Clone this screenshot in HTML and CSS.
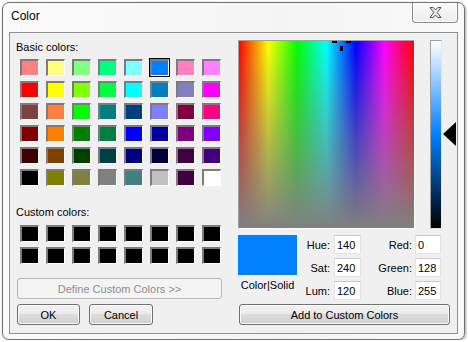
FILE: index.html
```html
<!DOCTYPE html>
<html lang="en">
<head>
    <meta charset="UTF-8">
    <title>Color</title>
    <link rel="stylesheet" href="styles.css">
</head>
<body>
    <div class="window">
        <div class="titlebar">
            <span class="title">Color</span>
            <div class="close">
                <svg width="13" height="11" viewBox="0 0 13 11"><polygon points="1,0.5 4.2,0.5 6.5,3 8.8,0.5 12,0.5 8.2,5.5 12,10.5 8.8,10.5 6.5,8 4.2,10.5 1,10.5 4.8,5.5" fill="#e9e9ec" stroke="#4f5361" stroke-width="1" stroke-linejoin="round"/></svg>
            </div>
        </div>
        <div class="client">
            <div class="left">
                <div class="label">Basic colors:</div>
                <div class="swatches">
                    <div class="swatch" style="background:#ff8080"></div>
                    <div class="swatch" style="background:#ffff80"></div>
                    <div class="swatch" style="background:#80ff80"></div>
                    <div class="swatch" style="background:#00ff80"></div>
                    <div class="swatch" style="background:#80ffff"></div>
                    <div class="swatch selected" style="background:#0080ff"></div>
                    <div class="swatch" style="background:#ff80c0"></div>
                    <div class="swatch" style="background:#ff80ff"></div>

                    <div class="swatch" style="background:#ff0000"></div>
                    <div class="swatch" style="background:#ffff00"></div>
                    <div class="swatch" style="background:#80ff00"></div>
                    <div class="swatch" style="background:#00ff40"></div>
                    <div class="swatch" style="background:#00ffff"></div>
                    <div class="swatch" style="background:#0080c0"></div>
                    <div class="swatch" style="background:#8080c0"></div>
                    <div class="swatch" style="background:#ff00ff"></div>

                    <div class="swatch" style="background:#804040"></div>
                    <div class="swatch" style="background:#ff8040"></div>
                    <div class="swatch" style="background:#00ff00"></div>
                    <div class="swatch" style="background:#008080"></div>
                    <div class="swatch" style="background:#004080"></div>
                    <div class="swatch" style="background:#8080ff"></div>
                    <div class="swatch" style="background:#800040"></div>
                    <div class="swatch" style="background:#ff0080"></div>

                    <div class="swatch" style="background:#800000"></div>
                    <div class="swatch" style="background:#ff8000"></div>
                    <div class="swatch" style="background:#008000"></div>
                    <div class="swatch" style="background:#008040"></div>
                    <div class="swatch" style="background:#0000ff"></div>
                    <div class="swatch" style="background:#0000a0"></div>
                    <div class="swatch" style="background:#800080"></div>
                    <div class="swatch" style="background:#8000ff"></div>

                    <div class="swatch" style="background:#400000"></div>
                    <div class="swatch" style="background:#804000"></div>
                    <div class="swatch" style="background:#004000"></div>
                    <div class="swatch" style="background:#004040"></div>
                    <div class="swatch" style="background:#000080"></div>
                    <div class="swatch" style="background:#000040"></div>
                    <div class="swatch" style="background:#400040"></div>
                    <div class="swatch" style="background:#400080"></div>

                    <div class="swatch" style="background:#000000"></div>
                    <div class="swatch" style="background:#808000"></div>
                    <div class="swatch" style="background:#808040"></div>
                    <div class="swatch" style="background:#808080"></div>
                    <div class="swatch" style="background:#408080"></div>
                    <div class="swatch" style="background:#c0c0c0"></div>
                    <div class="swatch" style="background:#400040"></div>
                    <div class="swatch" style="background:#ffffff"></div>
                </div>

                <div class="label custom-label">Custom colors:</div>
                <div class="swatches custom">
                    <div class="swatch"></div><div class="swatch"></div><div class="swatch"></div><div class="swatch"></div>
                    <div class="swatch"></div><div class="swatch"></div><div class="swatch"></div><div class="swatch"></div>
                    <div class="swatch"></div><div class="swatch"></div><div class="swatch"></div><div class="swatch"></div>
                    <div class="swatch"></div><div class="swatch"></div><div class="swatch"></div><div class="swatch"></div>
                </div>

                <button class="btn define" disabled>Define Custom Colors &gt;&gt;</button>
                <div class="btn-row">
                    <button class="btn ok">OK</button>
                    <button class="btn cancel">Cancel</button>
                </div>
            </div>

            <div class="right">
                <div class="picker">
                    <div class="spectrum">
                        <span class="cross cross-l"></span>
                        <span class="cross cross-r"></span>
                        <span class="cross cross-d"></span>
                    </div>
                    <div class="lum"></div>
                    <div class="arrow"></div>
                </div>

                <div class="values">
                    <div class="preview">
                        <div class="preview-box"></div>
                        <div class="preview-label">Color|Solid</div>
                    </div>
                    <label class="field-label">Hue:</label><input class="field" type="text" value="140">
                    <label class="field-label rgb">Red:</label><input class="field" type="text" value="0">
                    <label class="field-label">Sat:</label><input class="field" type="text" value="240">
                    <label class="field-label rgb">Green:</label><input class="field" type="text" value="128">
                    <label class="field-label">Lum:</label><input class="field" type="text" value="120">
                    <label class="field-label rgb">Blue:</label><input class="field" type="text" value="255">
                </div>

                <button class="btn add">Add to Custom Colors</button>
            </div>
        </div>
    </div>
</body>
</html>
```

FILE: styles.css
```css
body {
    margin: 0;
    background: #fff;
    font-family: "Liberation Sans", Arial, sans-serif;
    font-size: 11px;
    color: #000;
}

.window {
    box-sizing: border-box;
    width: 463px;
    height: 338px;
    margin: 2px 0 0 2px;
    border: 1px solid #6f6f6f;
    border-radius: 7px;
    background: linear-gradient(to right, #fbfbfb, #f4f4f4 60%, #f9f9f9);
    box-shadow: 1px 1px 3px rgba(0, 0, 0, 0.35);
    overflow: hidden;
}

.titlebar {
    height: 29px;
    display: flex;
    align-items: flex-start;
}

.title {
    font-size: 12px;
    line-height: 15px;
    padding: 6px 0 0 8px;
}

.close {
    box-sizing: border-box;
    width: 46px;
    height: 20px;
    margin-left: auto;
    margin-right: 6px;
    border: 1px solid #8a8a8a;
    border-top: 0;
    border-radius: 0 0 4px 4px;
    background: linear-gradient(#fafafa, #ececec);
    box-shadow: inset 0 0 0 1px #fff;
    display: flex;
    align-items: center;
    justify-content: center;
}

.close svg {
    display: block;
    margin-top: -1px;
}

.client {
    box-sizing: border-box;
    height: 302px;
    margin: 0 6px;
    border: 1px solid #8f9091;
    background: #f0f0f0;
    display: flex;
}

.left {
    width: 228px;
    padding-top: 8px;
}

.label {
    line-height: 13px;
    margin-left: 6px;
}

.swatches {
    display: grid;
    grid-template-columns: repeat(8, 19px);
    grid-auto-rows: 17px;
    column-gap: 7px;
    row-gap: 5px;
    margin: 5px 0 0 10px;
}

.swatch {
    box-sizing: border-box;
    border-style: solid;
    border-width: 2px 1px 1px 2px;
    border-color: #7c7c7c #fff #fff #7c7c7c;
}

.swatch.selected {
    outline: 1px solid #000;
}

.custom .swatch {
    background: #000;
}

.custom-label {
    margin-top: 20px;
}

.custom {
    margin-top: 6px;
}

.btn {
    box-sizing: border-box;
    height: 21px;
    padding: 0;
    font-family: inherit;
    font-size: 11px;
    color: #000;
    border: 1px solid #707070;
    border-radius: 3px;
    background: linear-gradient(#f2f2f2 0%, #ebebeb 50%, #dddddd 50%, #cfcfcf 100%);
    box-shadow: inset 0 0 0 1px #fbfbfb;
}

.btn.define {
    display: block;
    width: 205px;
    margin: 14px 0 0 7px;
    color: #8d8d8d;
    border-color: #b8b8b8;
    background: #f4f4f4;
    box-shadow: none;
}

.btn-row {
    display: flex;
    gap: 9px;
    margin: 5px 0 0 7px;
}

.btn.ok {
    width: 63px;
}

.btn.cancel {
    width: 64px;
}

.right {
    padding-top: 7px;
}

.picker {
    display: flex;
    align-items: flex-start;
}

.spectrum {
    position: relative;
    width: 177px;
    height: 189px;
    box-sizing: border-box;
    border-style: solid;
    border-width: 1px;
    border-color: #a0a0a0 #fff #fff #a0a0a0;
    background:
        linear-gradient(to bottom, rgba(128, 128, 128, 0), #808080),
        linear-gradient(to right, #ff0000, #ffff00 16.67%, #00ff00 33.33%, #00ffff 50%, #0000ff 66.67%, #ff00ff 83.33%, #ff0000);
}

.cross {
    position: absolute;
    background: #000;
}

.cross-l {
    left: 93px;
    top: 0;
    width: 5px;
    height: 2px;
}

.cross-r {
    left: 107px;
    top: 0;
    width: 5px;
    height: 2px;
}

.cross-d {
    left: 101px;
    top: 5px;
    width: 3px;
    height: 5px;
}

.lum {
    box-sizing: border-box;
    width: 12px;
    height: 189px;
    margin-left: 15px;
    border-style: solid;
    border-width: 1px;
    border-color: #a0a0a0 #e8e8e8 #e8e8e8 #a0a0a0;
    background: linear-gradient(to bottom, #fff, #0080ff 50%, #000);
}

.arrow {
    width: 0;
    height: 0;
    margin: 82px 0 0 1px;
    border-right: 13px solid #000;
    border-top: 12.5px solid transparent;
    border-bottom: 12.5px solid transparent;
}

.values {
    display: grid;
    grid-template-columns: 59px 37px 27px 54px 26px;
    grid-template-rows: 20px 20px 20px;
    row-gap: 3px;
    margin-top: 6px;
}

.preview {
    grid-column: 1;
    grid-row: 1 / 4;
}

.preview-box {
    height: 40px;
    background: #0080ff;
}

.preview-label {
    margin-top: 4px;
    line-height: 13px;
    text-align: center;
}

.field-label {
    text-align: right;
    line-height: 20px;
    padding-right: 4px;
}

.field-label.rgb {
    padding-right: 3px;
}

.field {
    box-sizing: border-box;
    width: 100%;
    height: 19px;
    margin: 0;
    padding: 0 2px;
    font-family: inherit;
    font-size: 11px;
    color: #000;
    background: #fff;
    border: 1px solid #e2e3e5;
    border-top-color: #c9cacd;
    outline: 0;
}

.btn.add {
    display: block;
    width: 211px;
    margin: 3px 0 0 1px;
}
```
